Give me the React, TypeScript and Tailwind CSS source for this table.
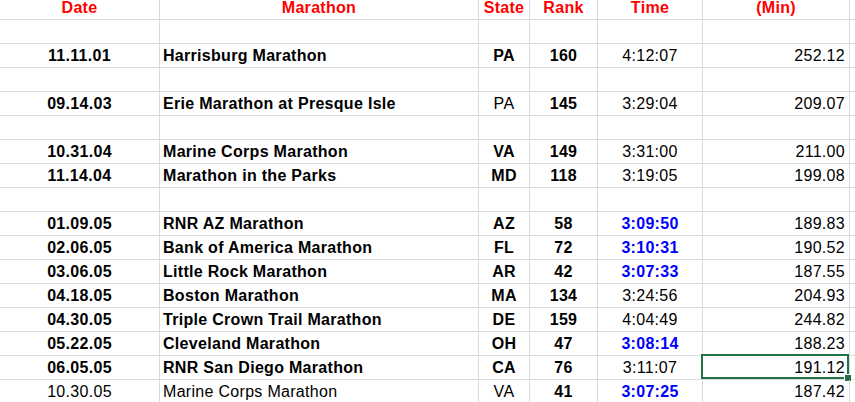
import React from 'react';

// ============================================
// Sheet data
// ============================================

type Cell = { text: string; bold?: boolean; blue?: boolean };

interface RowData {
  date?: Cell;
  name?: Cell;
  state?: Cell;
  rank?: Cell;
  time?: Cell;
  min?: Cell;
  selected?: boolean;
}

const b = (text: string): Cell => ({ text, bold: true });
const r = (text: string): Cell => ({ text });
const blue = (text: string): Cell => ({ text, bold: true, blue: true });

const ROWS: RowData[] = [
  {},
  { date: b('11.11.01'), name: b('Harrisburg Marathon'), state: b('PA'), rank: b('160'), time: r('4:12:07'), min: r('252.12') },
  {},
  { date: b('09.14.03'), name: b('Erie Marathon at Presque Isle'), state: r('PA'), rank: b('145'), time: r('3:29:04'), min: r('209.07') },
  {},
  { date: b('10.31.04'), name: b('Marine Corps Marathon'), state: b('VA'), rank: b('149'), time: r('3:31:00'), min: r('211.00') },
  { date: b('11.14.04'), name: b('Marathon in the Parks'), state: b('MD'), rank: b('118'), time: r('3:19:05'), min: r('199.08') },
  {},
  { date: b('01.09.05'), name: b('RNR AZ Marathon'), state: b('AZ'), rank: b('58'), time: blue('3:09:50'), min: r('189.83') },
  { date: b('02.06.05'), name: b('Bank of America Marathon'), state: b('FL'), rank: b('72'), time: blue('3:10:31'), min: r('190.52') },
  { date: b('03.06.05'), name: b('Little Rock Marathon'), state: b('AR'), rank: b('42'), time: blue('3:07:33'), min: r('187.55') },
  { date: b('04.18.05'), name: b('Boston Marathon'), state: b('MA'), rank: b('134'), time: r('3:24:56'), min: r('204.93') },
  { date: b('04.30.05'), name: b('Triple Crown Trail Marathon'), state: b('DE'), rank: b('159'), time: r('4:04:49'), min: r('244.82') },
  { date: b('05.22.05'), name: b('Cleveland Marathon'), state: b('OH'), rank: b('47'), time: blue('3:08:14'), min: r('188.23') },
  { date: b('06.05.05'), name: b('RNR San Diego Marathon'), state: b('CA'), rank: b('76'), time: r('3:11:07'), min: r('191.12'), selected: true },
  { date: r('10.30.05'), name: r('Marine Corps Marathon'), state: r('VA'), rank: b('41'), time: blue('3:07:25'), min: r('187.42') },
];

const GRID = 'grid grid-cols-[160px_319px_51px_68px_105px_147px_1fr]';
const CELL = 'h-[24px] pt-[1px] border-r border-b border-[#dadada] flex items-center overflow-hidden whitespace-nowrap';

function Text({ cell }: { cell?: Cell }) {
  if (!cell) return null;
  const color = cell.blue ? 'text-[#0000ff]' : 'text-black';
  return <span className={`${color} ${cell.bold ? 'font-bold' : 'font-normal'}`}>{cell.text}</span>;
}

function HeaderCell({ label }: { label?: string }) {
  return (
    <div className={`${CELL} justify-center`}>
      {label && <span className="font-bold text-[#ff0000]">{label}</span>}
    </div>
  );
}

function SheetRow({ row }: { row: RowData }) {
  return (
    <div className={GRID}>
      <div className={`${CELL} justify-center`}>
        <Text cell={row.date} />
      </div>
      <div className={`${CELL} justify-start pl-[3px]`}>
        <Text cell={row.name} />
      </div>
      <div className={`${CELL} justify-center`}>
        <Text cell={row.state} />
      </div>
      <div className={`${CELL} justify-center`}>
        <Text cell={row.rank} />
      </div>
      <div className={`${CELL} justify-center`}>
        <Text cell={row.time} />
      </div>
      <div className={`${CELL} justify-end pr-[4px] relative overflow-visible`}>
        <Text cell={row.min} />
        {row.selected && (
          <>
            <div className="absolute -left-[2px] -top-[2px] right-0 bottom-0 border-2 border-[#217346] pointer-events-none" />
            <div className="absolute -right-[3px] -bottom-[3px] w-[6px] h-[6px] bg-[#217346] border border-white box-content" />
          </>
        )}
      </div>
      <div className="h-[24px] border-b border-[#dadada]" />
    </div>
  );
}

export default function App() {
  return (
    <div className="w-[855px] h-[402px] overflow-hidden bg-white font-['Liberation_Sans',Arial,sans-serif] text-[16px] leading-[24px] tracking-[0.3px]">
      <div className="-mt-[4px]">
        {/* 헤더 */}
        <div className={GRID}>
          <HeaderCell label="Date" />
          <HeaderCell label="Marathon" />
          <HeaderCell label="State" />
          <HeaderCell label="Rank" />
          <HeaderCell label="Time" />
          <HeaderCell label="(Min)" />
          <div className="h-[24px] border-b border-[#dadada]" />
        </div>

        {/* 데이터 행 */}
        {ROWS.map((row, i) => (
          <SheetRow key={i} row={row} />
        ))}
      </div>
    </div>
  );
}
